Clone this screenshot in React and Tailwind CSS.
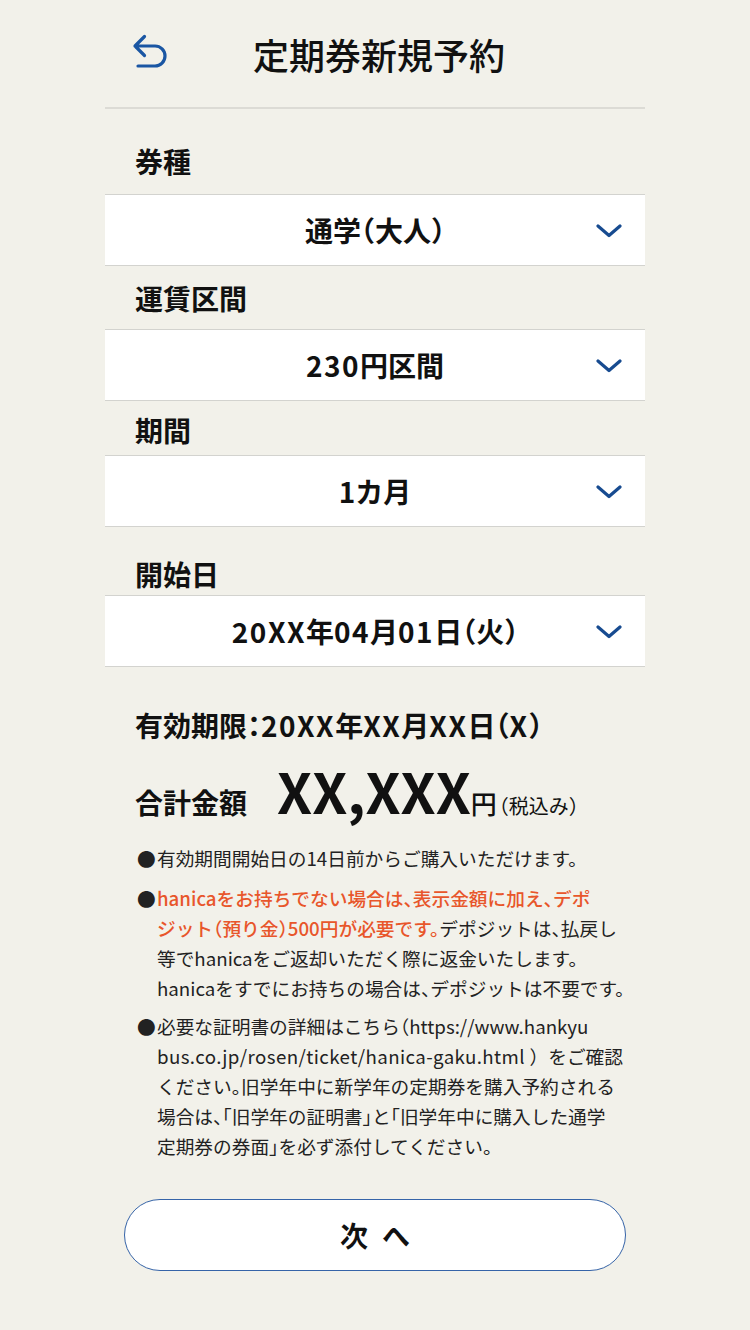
import React from 'react'

const jp = { fontFamily: '"Noto Sans CJK JP", "Noto Sans", sans-serif' }

const Chevron = () => (
  <svg width="26" height="14" viewBox="0 0 26 14" fill="none">
    <path d="M2 2 L13 11.5 L24 2" stroke="#174b90" strokeWidth="3.2" strokeLinecap="round" strokeLinejoin="round" />
  </svg>
)

const BackArrow = () => (
  <svg width="40" height="34" viewBox="0 0 40 34" fill="none">
    <path
      d="M4 12 H24 A10 10 0 0 1 24 32 H7 M4 12 L13.5 2.5 M4 12 L13.5 21.5"
      stroke="#1a56a3"
      strokeWidth="3.2"
      strokeLinecap="round"
      strokeLinejoin="round"
    />
  </svg>
)

const L = ({ children }) => <span className="tracking-[1.5px]">{children}</span>

const Select = ({ children }) => (
  <div className="relative h-[72px] bg-white border-y border-[#d3d3cf] flex items-center justify-center">
    <span className="text-[28px] font-bold text-[#111] leading-none">{children}</span>
    <div className="absolute right-[23px] top-[29px]">
      <Chevron />
    </div>
  </div>
)

const Label = ({ children, className }) => (
  <div className={'pl-[30px] text-[28px] font-bold text-[#111] leading-[32px] ' + className}>{children}</div>
)

const Red = ({ children }) => <span className="text-[#e8562b] font-medium">{children}</span>

export default function App() {
  return (
    <div className="min-h-screen bg-[#f2f1ea] flex justify-center [font-feature-settings:'halt']" style={jp}>
      <div className="w-[540px]">
        <header className="h-[109px] border-b-2 border-[#dcdbd5] grid grid-cols-[1fr_auto_1fr] items-center">
          <div className="pl-[26px] pb-[6px]">
            <BackArrow />
          </div>
          <h1 className="pl-[8px] text-[36px] font-medium text-[#111] leading-none">定期券新規予約</h1>
          <div />
        </header>

        <Label className="pt-[36px] pb-[17px]">券種</Label>
        <Select>通学（大人）</Select>
        <Label className="pt-[16px] pb-[15px]">運賃区間</Label>
        <Select>
          <L>230</L>円区間
        </Select>
        <Label className="pt-[13px] pb-[9px]">期間</Label>
        <Select>1カ月</Select>
        <Label className="pt-[31px] pb-[5px]">開始日</Label>
        <Select>
          <L>20XX</L>年<L>04</L>月<L>01</L>日（火）
        </Select>

        <div className="pl-[30px] mt-[40px] text-[28px] font-bold text-[#111] leading-[36px]">
          有効期限：<L>20XX</L>年<L>XX</L>月<L>XX</L>日（<L>X</L>）
        </div>

        <div className="pl-[30px] mt-[14px] flex items-baseline text-[#111]">
          <span className="text-[28px] font-bold">合計金額</span>
          <span className="ml-[30px] text-[56px] font-bold leading-[66px]">XX,XXX</span>
          <span className="text-[26px] font-medium">円</span>
          <span className="text-[20px] ml-[2px]">（税込み）</span>
        </div>

        <div className="pl-[32px] pr-[14px] mt-[20px] text-[18.7px] leading-[30px] text-[#222] whitespace-nowrap">
          <p className="flex">
            <span className="w-[20px] shrink-0">●</span>
            <span>有効期間開始日の14日前からご購入いただけます。</span>
          </p>
          <p className="flex mt-[10px]">
            <span className="w-[20px] shrink-0">●</span>
            <span>
              <Red>hanicaをお持ちでない場合は、表示金額に加え、デポ</Red>
              <br />
              <Red>ジット（預り金）500円が必要です。</Red>デポジットは、払戻し
              <br />
              等でhanicaをご返却いただく際に返金いたします。
              <br />
              hanicaをすでにお持ちの場合は、デポジットは不要です。
            </span>
          </p>
          <p className="flex mt-[8px]">
            <span className="w-[20px] shrink-0">●</span>
            <span>
              必要な証明書の詳細はこちら（https://www.hankyu
              <br />
              <span className="tracking-[0.4px]">bus.co.jp/rosen/ticket/hanica-gaku.html </span>
              <span className="[font-feature-settings:normal]">）</span>をご確認
              <br />
              ください。旧学年中に新学年の定期券を購入予約される
              <br />
              場合は、「旧学年の証明書」と「旧学年中に購入した通学
              <br />
              定期券の券面」を必ず添付してください。
            </span>
          </p>
        </div>

        <div className="px-[19px] mt-[38px] pb-[58px]">
          <button className="w-full h-[72px] rounded-full bg-white border border-[#3664a8] flex items-center justify-center gap-[14px] text-[28px] font-bold text-[#111]">
            <span>次</span>
            <span>へ</span>
          </button>
        </div>
      </div>
    </div>
  )
}
